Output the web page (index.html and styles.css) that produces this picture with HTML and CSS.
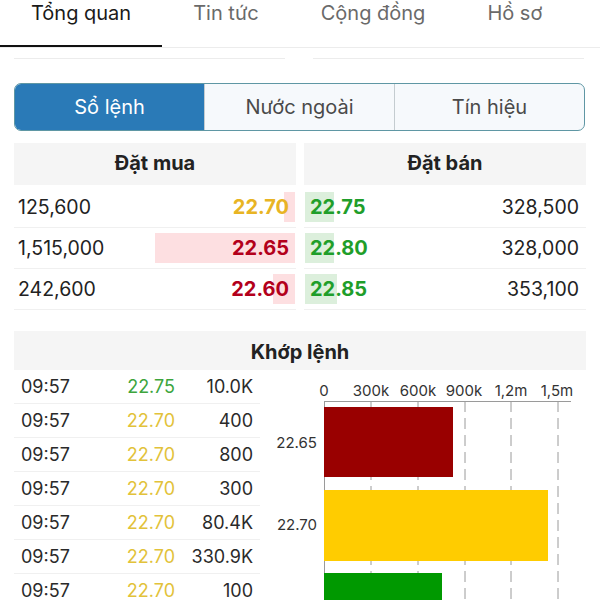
FILE: index.html
```html
<!DOCTYPE html>
<html>
<head>
    <title>Tổng quan</title>
    <link rel="stylesheet" href="styles.css">
</head>
<body>
    <nav class="tabs">
        <a class="tab active">Tổng quan</a>
        <a class="tab">Tin tức</a>
        <a class="tab">Cộng đồng</a>
        <a class="tab">Hồ sơ</a>
    </nav>

    <!-- bottom edge of the cards scrolled above -->
    <div class="prev-cards">
        <div class="prev-card"></div>
        <div class="prev-card"></div>
    </div>

    <div class="segmented">
        <div class="seg active">Sổ lệnh</div>
        <div class="seg">Nước ngoài</div>
        <div class="seg">Tín hiệu</div>
    </div>

    <div class="book">
        <div class="book-side buy">
            <div class="book-head">Đặt mua</div>
            <div class="book-row">
                <span class="depth" style="width: 11px;"></span>
                <span class="qty">125,600</span>
                <span class="price yellow">22.70</span>
            </div>
            <div class="book-row">
                <span class="depth" style="width: 140px;"></span>
                <span class="qty">1,515,000</span>
                <span class="price red">22.65</span>
            </div>
            <div class="book-row">
                <span class="depth" style="width: 22px;"></span>
                <span class="qty">242,600</span>
                <span class="price red">22.60</span>
            </div>
        </div>
        <div class="book-side sell">
            <div class="book-head">Đặt bán</div>
            <div class="book-row">
                <span class="depth" style="width: 29px;"></span>
                <span class="price green">22.75</span>
                <span class="qty">328,500</span>
            </div>
            <div class="book-row">
                <span class="depth" style="width: 29px;"></span>
                <span class="price green">22.80</span>
                <span class="qty">328,000</span>
            </div>
            <div class="book-row">
                <span class="depth" style="width: 32px;"></span>
                <span class="price green">22.85</span>
                <span class="qty">353,100</span>
            </div>
        </div>
    </div>

    <div class="match">
        <div class="match-head">Khớp lệnh</div>
        <div class="match-body">
            <div class="trades">
                <div class="trade"><span>09:57</span><span class="t-price up">22.75</span><span class="t-vol">10.0K</span></div>
                <div class="trade"><span>09:57</span><span class="t-price ref">22.70</span><span class="t-vol">400</span></div>
                <div class="trade"><span>09:57</span><span class="t-price ref">22.70</span><span class="t-vol">800</span></div>
                <div class="trade"><span>09:57</span><span class="t-price ref">22.70</span><span class="t-vol">300</span></div>
                <div class="trade"><span>09:57</span><span class="t-price ref">22.70</span><span class="t-vol">80.4K</span></div>
                <div class="trade"><span>09:57</span><span class="t-price ref">22.70</span><span class="t-vol">330.9K</span></div>
                <div class="trade"><span>09:57</span><span class="t-price ref">22.70</span><span class="t-vol">100</span></div>
            </div>
            <div class="chart">
                <svg width="326" height="240" viewBox="0 0 326 240">
                    <!-- axis labels -->
                    <g class="axis-label" text-anchor="middle">
                        <text x="64" y="26">0</text>
                        <text x="111" y="26">300k</text>
                        <text x="158" y="26">600k</text>
                        <text x="204" y="26">900k</text>
                        <text x="251" y="26">1,2m</text>
                        <text x="297" y="26">1,5m</text>
                    </g>
                    <!-- grid -->
                    <g stroke="#9a9a9a" stroke-width="1">
                        <line x1="111" y1="31" x2="111" y2="240" stroke-dasharray="11 6"/>
                        <line x1="158" y1="31" x2="158" y2="240" stroke-dasharray="11 6"/>
                        <line x1="205" y1="31" x2="205" y2="240" stroke-dasharray="11 6"/>
                        <line x1="251" y1="31" x2="251" y2="240" stroke-dasharray="11 6"/>
                        <line x1="298" y1="31" x2="298" y2="240" stroke-dasharray="11 6"/>
                        <line x1="64" y1="31.5" x2="311" y2="31.5"/>
                        <line x1="64.5" y1="31" x2="64.5" y2="240"/>
                    </g>
                    <!-- bars -->
                    <rect x="64" y="37" width="129" height="70" fill="#990000"/>
                    <rect x="64" y="120" width="224" height="71" fill="#ffcc00"/>
                    <rect x="64" y="203" width="118" height="40" fill="#009900"/>
                    <g class="cat-label" text-anchor="end">
                        <text x="57" y="78">22.65</text>
                        <text x="57" y="160">22.70</text>
                    </g>
                </svg>
            </div>
        </div>
    </div>
</body>
</html>
```

FILE: styles.css
```css
body {
    margin: 0;
    width: 600px;
    height: 600px;
    overflow: hidden;
    background: #fff;
    font-family: Inter, "Noto Sans", sans-serif;
    color: #222;
}

/* top tabs */
.tabs {
    display: flex;
    border-bottom: 1px solid #ececec;
}

.tab {
    padding: 0 31px 19px;
    font-size: 20px;
    line-height: 26px;
    color: #6a6a6a;
    border-bottom: 2px solid transparent;
}

.tab.active {
    color: #1a1a1a;
    border-bottom-color: #111;
}

.prev-cards {
    display: flex;
    gap: 28px;
    padding: 0 16px 0 14px;
}

.prev-card {
    flex: 1;
    height: 10px;
    border-bottom: 1px solid #ececec;
}

/* segmented control */
.segmented {
    display: flex;
    margin: 24px 15px 0 14px;
    height: 46px;
    border: 1px solid #5f97a4;
    border-radius: 7px;
    overflow: hidden;
    background: #f6f9fc;
}

.seg {
    flex: 1;
    display: flex;
    align-items: center;
    justify-content: center;
    font-size: 20px;
    color: #4a4a4a;
    border-left: 1px solid #c4ccd0;
}

.seg:first-child {
    border-left: none;
}

.seg.active {
    background: #2a7ab7;
    color: #fff;
}

/* order book */
.book {
    display: flex;
    gap: 8px;
    margin: 12px 14px 0;
}

.book-side {
    flex: 1;
}

.book-head {
    height: 42px;
    line-height: 40px;
    text-align: center;
    font-size: 20px;
    font-weight: 700;
    background: #f5f5f5;
    margin-bottom: 2px;
}

.book-row {
    position: relative;
    display: flex;
    justify-content: space-between;
    align-items: center;
    height: 40px;
    border-bottom: 1px solid #f0f0f0;
    font-size: 19.5px;
}

.buy .book-row {
    padding: 0 7px 0 4px;
}

.sell .book-row {
    padding: 0 7px 0 6px;
}

.book-row span {
    position: relative;
}

.book-row .depth {
    position: absolute;
    top: 5px;
    bottom: 5px;
}

.buy .depth {
    right: 1px;
    background: #fddfe1;
}

.buy .book-row:first-of-type .depth {
    background: #fcf3dc;
}

.sell .depth {
    left: 1px;
    background: #dcefdc;
}

.price {
    font-weight: 700;
    font-size: 20px;
}

.yellow {
    color: #e8b424;
}

.red {
    color: #b3001b;
}

.green {
    color: #1f9e2a;
}

/* matched orders */
.match {
    margin: 21px 14px 0;
}

.match-head {
    height: 39px;
    line-height: 42px;
    text-align: center;
    font-size: 20px;
    font-weight: 700;
    background: #f5f5f5;
}

.match-body {
    display: grid;
    grid-template-columns: 246px 1fr;
}

.trade {
    display: grid;
    grid-template-columns: 1fr 80px 78px;
    align-items: center;
    height: 33px;
    padding: 0 7px;
    border-bottom: 1px solid #f0f0f0;
    font-size: 18px;
    color: #2a2a2a;
}

.t-price,
.t-vol {
    text-align: right;
}

.t-price.up {
    color: #3da53d;
}

.t-price.ref {
    color: #e2c23a;
}

.chart svg {
    display: block;
}

.axis-label text,
.cat-label text {
    font-family: Inter, "Noto Sans", sans-serif;
    font-size: 15px;
    fill: #333;
}
```
